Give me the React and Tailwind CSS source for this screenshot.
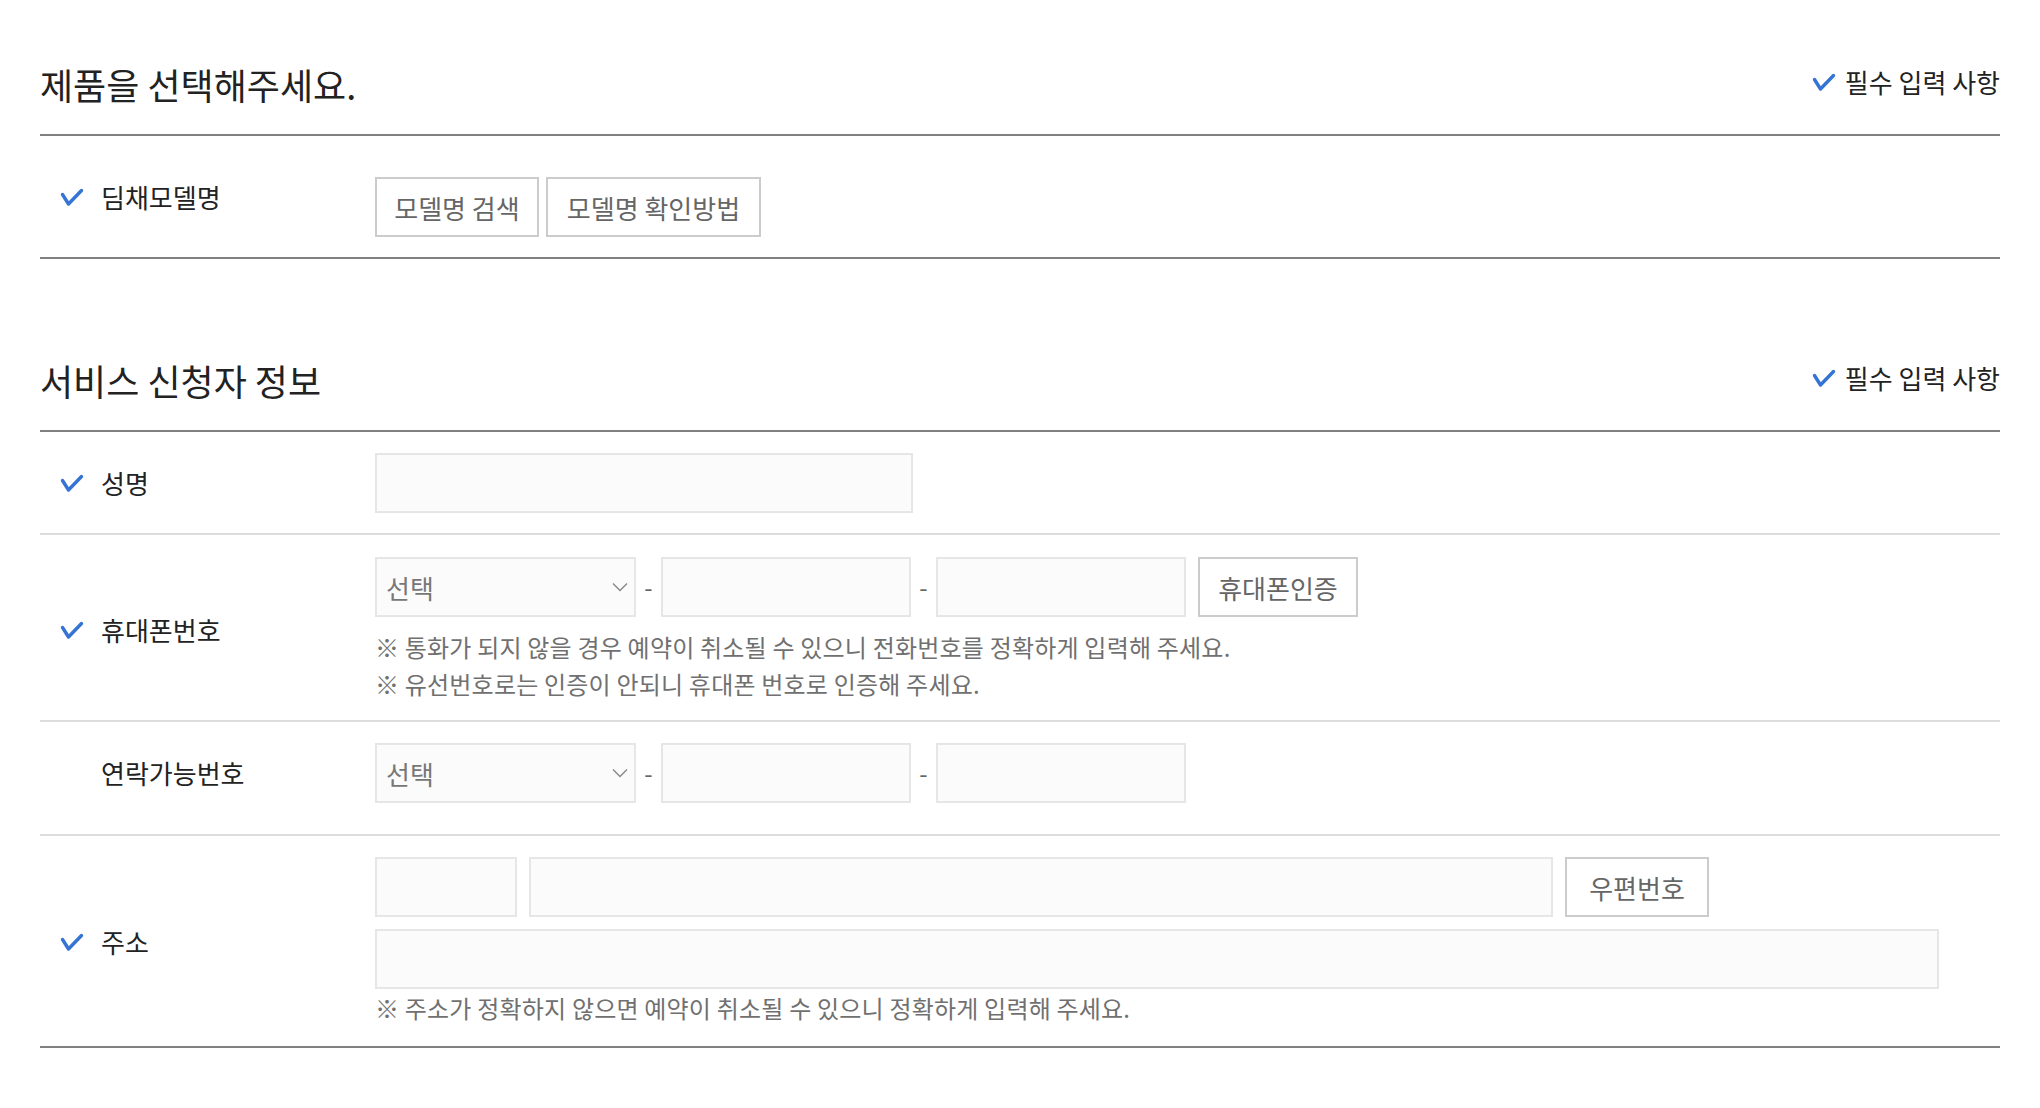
import React from "react";

const font = "font-['Noto_Sans_CJK_KR','Noto_Sans',sans-serif]";

function Check() {
  return (
    <svg width="24" height="20" viewBox="0 0 24 20" className="shrink-0">
      <polyline
        points="2.5,7.5 8.5,17 21.5,3.5"
        fill="none"
        stroke="#3574d4"
        strokeWidth="3.4"
        strokeLinecap="round"
        strokeLinejoin="round"
      />
    </svg>
  );
}

function SectionHead({ title, className }) {
  return (
    <div className={"h-[95px] flex items-center border-b-2 border-[#808080] " + className}>
      <div className="flex w-full items-center justify-between">
        <h2 className="mb-[7px] text-[36px] leading-[44px] text-[#222] font-normal">{title}</h2>
        <div className="mb-[11px] flex items-center gap-[9px] text-[26px] leading-[32px] text-[#222]">
          <Check />
          <span>필수 입력 사항</span>
        </div>
      </div>
    </div>
  );
}

function Label({ text, required }) {
  return (
    <div className="w-[335px] shrink-0 pl-[20px] flex items-center text-[26px] leading-[36px] text-[#222]">
      <div className="w-[41px] shrink-0 flex items-center">{required && <Check />}</div>
      <span>{text}</span>
    </div>
  );
}

function Box({ w }) {
  return (
    <input
      type="text"
      className={"h-[60px] border-2 border-[#e6e6e6] bg-[#fbfbfb] outline-none px-[10px] text-[24px] " + w}
    />
  );
}

function Select() {
  return (
    <div className="h-[60px] w-[261px] border-2 border-[#e6e6e6] bg-[#fbfbfb] flex items-center justify-between pl-[9px] pr-[6px] text-[26px] text-[#777]">
      <span>선택</span>
      <svg width="16" height="10" viewBox="0 0 16 10">
        <polyline points="1,1.5 8,8.5 15,1.5" fill="none" stroke="#888" strokeWidth="1.4" />
      </svg>
    </div>
  );
}

function Dash() {
  return <span className="w-[25px] text-center text-[24px] text-[#666]">-</span>;
}

function Btn({ children, w }) {
  return (
    <button className={"h-[60px] border-2 border-[#cccccc] bg-white text-[26px] text-[#666] " + w}>
      {children}
    </button>
  );
}

function Note({ children }) {
  return <p className="text-[24px] tracking-[0.2px] leading-[37px] text-[#707070]">{children}</p>;
}

export default function App() {
  return (
    <div className={"bg-white min-h-[1108px] px-[40px] pt-[41px] " + font}>
      <SectionHead title="제품을 선택해주세요." className="" />

      <div className="flex items-start pt-[41px] pb-[20px] border-b-2 border-[#808080]">
        <div className="mt-[2px]">
          <Label text="딤채모델명" required />
        </div>
        <div className="flex gap-[7px]">
          <Btn w="w-[164px]">모델명 검색</Btn>
          <Btn w="w-[215px]">모델명 확인방법</Btn>
        </div>
      </div>

      <SectionHead title="서비스 신청자 정보" className="mt-[78px]" />

      <div className="flex items-center pt-[21px] pb-[20px] border-b-2 border-[#dcdcdc]">
        <Label text="성명" required />
        <Box w="w-[538px]" />
      </div>

      <div className="flex items-center pt-[22px] pb-[18px] border-b-2 border-[#dcdcdc]">
        <Label text="휴대폰번호" required />
        <div className="flex flex-col">
          <div className="flex items-center">
            <Select />
            <Dash />
            <Box w="w-[250px]" />
            <Dash />
            <Box w="w-[250px]" />
            <div className="w-[12px]" />
            <Btn w="w-[160px]">휴대폰인증</Btn>
          </div>
          <div className="mt-[11px]">
            <Note>※ 통화가 되지 않을 경우 예약이 취소될 수 있으니 전화번호를 정확하게 입력해 주세요.</Note>
            <Note>※ 유선번호로는 인증이 안되니 휴대폰 번호로 인증해 주세요.</Note>
          </div>
        </div>
      </div>

      <div className="flex items-center pt-[21px] pb-[31px] border-b-2 border-[#dcdcdc]">
        <Label text="연락가능번호" />
        <div className="flex items-center">
          <Select />
          <Dash />
          <Box w="w-[250px]" />
          <Dash />
          <Box w="w-[250px]" />
        </div>
      </div>

      <div className="flex items-center pt-[21px] pb-[20px] border-b-2 border-[#808080]">
        <Label text="주소" required />
        <div className="flex flex-col">
          <div className="flex items-center gap-[12px]">
            <Box w="w-[142px]" />
            <Box w="w-[1024px]" />
            <Btn w="w-[144px]">우편번호</Btn>
          </div>
          <div className="mt-[12px]">
            <Box w="w-[1564px]" />
          </div>
          <Note>※ 주소가 정확하지 않으면 예약이 취소될 수 있으니 정확하게 입력해 주세요.</Note>
        </div>
      </div>
    </div>
  );
}
